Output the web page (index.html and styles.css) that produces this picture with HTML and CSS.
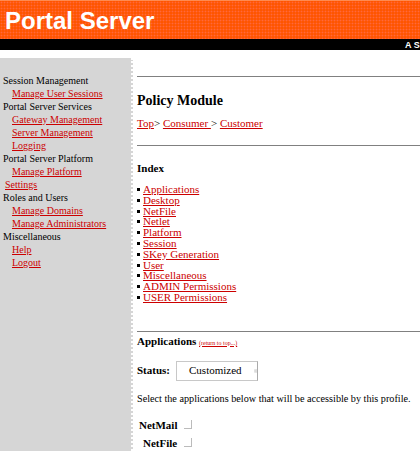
FILE: index.html
```html
<!DOCTYPE html>
<html lang="en">
<head>
    <meta charset="UTF-8">
    <title>Portal Server - Policy Module</title>
    <link rel="stylesheet" href="styles.css">
</head>
<body>
    <div class="masthead">
        <div class="brand">Portal Server</div>
    </div>
    <div class="tagbar">A Sun Microsystems Product</div>

    <div class="page">
        <div class="sidebar">
            <div class="group">Session Management</div>
            <a href="#" class="side-link">Manage User Sessions</a>
            <div class="group">Portal Server Services</div>
            <a href="#" class="side-link">Gateway Management</a>
            <a href="#" class="side-link">Server Management</a>
            <a href="#" class="side-link">Logging</a>
            <div class="group">Portal Server Platform</div>
            <a href="#" class="side-link">Manage Platform<br><span class="wrap">Settings</span></a>
            <div class="group">Roles and Users</div>
            <a href="#" class="side-link">Manage Domains</a>
            <a href="#" class="side-link">Manage Administrators</a>
            <div class="group">Miscellaneous</div>
            <a href="#" class="side-link">Help</a>
            <a href="#" class="side-link">Logout</a>
        </div>

        <div class="main">
            <hr class="rule first">
            <h1>Policy Module</h1>
            <div class="crumbs">
                <a href="#">Top</a>&gt; <a href="#">Consumer </a>&gt; <a href="#">Customer</a>
            </div>
            <hr class="rule">

            <h2>Index</h2>
            <ul class="index">
                <li><a href="#">Applications</a></li>
                <li><a href="#">Desktop</a></li>
                <li><a href="#">NetFile</a></li>
                <li><a href="#">Netlet</a></li>
                <li><a href="#">Platform</a></li>
                <li><a href="#">Session</a></li>
                <li><a href="#">SKey Generation</a></li>
                <li><a href="#">User</a></li>
                <li><a href="#">Miscellaneous</a></li>
                <li><a href="#">ADMIN Permissions</a></li>
                <li><a href="#">USER Permissions</a></li>
            </ul>

            <hr class="rule">
            <div class="section-title">
                <b>Applications</b> <a href="#" class="top-link">(return to top...)</a>
            </div>

            <div class="status-row">
                <b>Status:</b>
                <div class="select">
                    Customized
                    <svg class="select-icon" width="8" height="6" viewBox="0 0 8 6">
                        <path d="M0.5 0.5 H7.5 V5.5 H0.5 M0.5 3 H5" fill="none" stroke="#999" stroke-width="1"/>
                    </svg>
                </div>
            </div>

            <p class="hint">Select the applications below that will be accessible by this profile.</p>

            <div class="check-row"><b>NetMail</b> <span class="check"></span></div>
            <div class="check-row indent"><b>NetFile</b> <span class="check"></span></div>
        </div>
    </div>
</body>
</html>
```

FILE: styles.css
```css
/* Base */
body {
    margin: 0;
    background: #fff;
    color: #000;
    font-family: "Liberation Serif", "Times New Roman", serif;
    overflow: hidden;
}

a {
    color: #cc0000;
    text-decoration: underline;
}

/* Header */
.masthead {
    height: 39px;
    background-color: #ff5500;
    background-image: radial-gradient(circle, rgba(255, 120, 110, 0.55) 0.8px, transparent 1.1px);
    background-size: 3px 3px;
    border-top: 1px solid #ff8a50;
    box-sizing: border-box;
}

.brand {
    font-family: "Liberation Sans", Arial, sans-serif;
    font-weight: bold;
    font-size: 24px;
    color: #fff;
    padding: 6px 0 0 5px;
    line-height: 28px;
}

.tagbar {
    height: 11px;
    background: #000;
    color: #fff;
    font-family: "Liberation Sans", Arial, sans-serif;
    font-weight: bold;
    font-size: 9px;
    line-height: 12px;
    white-space: nowrap;
    padding-left: 405px;
    overflow: hidden;
}

/* Layout */
.page {
    display: flex;
    margin-top: 8px;
    min-height: 420px;
}

.sidebar {
    width: 131px;
    flex-shrink: 0;
    background: #d6d6d6;
    border-right: 2px dotted #fff;
    padding-top: 16px;
    font-size: 10px;
    line-height: 13px;
}

.group {
    padding-left: 3px;
}

.side-link {
    display: block;
    padding-left: 12px;
}
.side-link .wrap {
    margin-left: -7px;
}

.main {
    flex: 1;
    padding-left: 4px;
    font-size: 11px;
    line-height: 13px;
}

.rule {
    border: none;
    border-top: 1px solid #808080;
    margin: 0;
}
.rule.first {
    margin-top: 18px;
}

h1 {
    font-size: 14px;
    margin: 17px 0 10px;
}

.crumbs {
    margin-bottom: 15px;
}

h2 {
    font-size: 11px;
    margin: 16px 0 9px;
}

/* Index list */
.index {
    list-style: none;
    padding: 0;
    margin: 0 0 28px;
    line-height: 10.8px;
}
.index li::before {
    content: "";
    display: inline-block;
    width: 3px;
    height: 3px;
    background: #000;
    margin-right: 3px;
    vertical-align: 2px;
}

.section-title {
    margin: 3px 0 11px;
}

.top-link {
    font-size: 6px;
}

/* Status select */
.status-row {
    display: flex;
    align-items: center;
    gap: 6px;
}

.select {
    width: 82px;
    height: 20px;
    border: 1px solid #c8c8c8;
    border-right-color: #aaa;
    box-sizing: border-box;
    display: flex;
    align-items: center;
    padding-left: 12px;
    gap: 12px;
}

.hint {
    font-size: 10.2px;
    white-space: nowrap;
    margin: 11px 0 14px;
}

.check-row {
    margin-bottom: 5px;
    padding-left: 2px;
}
.check-row.indent {
    padding-left: 6px;
}

.check {
    display: inline-block;
    width: 7px;
    height: 8px;
    border-right: 1px solid #bbb;
    border-bottom: 1px solid #bbb;
    margin-left: 4px;
}
```
